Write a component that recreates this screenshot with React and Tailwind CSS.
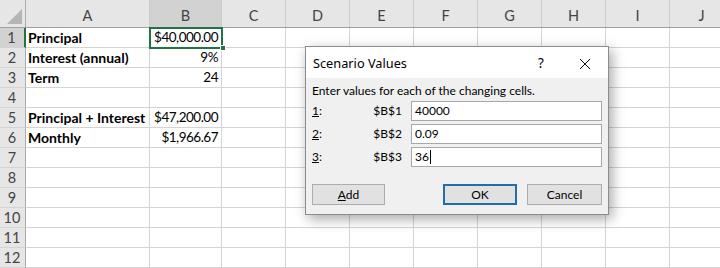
import React from "react";

const cols = [
  { k: "A", w: "w-[124px]" },
  { k: "B", w: "w-[72px]" },
  { k: "C", w: "w-[64px]" },
  { k: "D", w: "w-[64px]" },
  { k: "E", w: "w-[64px]" },
  { k: "F", w: "w-[64px]" },
  { k: "G", w: "w-[64px]" },
  { k: "H", w: "w-[64px]" },
  { k: "I", w: "w-[64px]" },
  { k: "J", w: "w-[64px]" },
];

const data = {
  1: ["Principal", "$40,000.00"],
  2: ["Interest (annual)", "9%"],
  3: ["Term", "24"],
  5: ["Principal + Interest", "$47,200.00"],
  6: ["Monthly", "$1,966.67"],
};

const rows = [1, 2, 3, 4, 5, 6, 7, 8, 9, 10, 11, 12];

function Row({ n }) {
  const d = data[n];
  return (
    <div className="flex h-[20px]">
      <div
        className={
          "w-[26px] shrink-0 flex items-center justify-center border-b border-[#d4d4d4] text-[14.5px] text-[#444] " +
          (n === 1
            ? "bg-[#d2d2d2] border-r-2 border-r-[#217346]"
            : "bg-[#e6e6e6] border-r border-r-[#ababab]")
        }
      >
        <span className="pr-[1px]">{n}</span>
      </div>
      {cols.map((c, i) => (
        <div
          key={c.k}
          className={
            c.w +
            " shrink-0 border-r border-b border-[#d4d4d4] flex items-center text-black whitespace-nowrap " +
            (i === 0
              ? "justify-start pl-[2px] font-bold text-[14px]"
              : "justify-end pr-[3px] text-[13.5px] tracking-[-0.5px]")
          }
        >
          {d && i === 0 ? d[0] : null}
          {d && i === 1 ? d[1] : null}
        </div>
      ))}
    </div>
  );
}

function Field({ n, cell, value, cursor }) {
  return (
    <div className="flex items-center h-[20px]">
      <span className="w-[40px] shrink-0">
        <span className="underline">{n}</span>:
      </span>
      <span className="w-[50px] shrink-0 text-right">{cell}</span>
      <div className="ml-[9px] w-[192px] h-[20px] bg-white border border-[#a8a8a8] flex items-center pl-[3px]">
        {value}
        {cursor ? <span className="inline-block w-[1px] h-[14px] bg-black ml-[1px]" /> : null}
      </div>
    </div>
  );
}

export default function App() {
  return (
    <div
      className="relative w-[720px] h-[268px] overflow-hidden bg-white"
      style={{ fontFamily: "Lato, 'Liberation Sans', sans-serif" }}
    >
      {/* column header */}
      <div className="flex h-[28px] bg-[#e6e6e6] border-b border-[#9f9f9f]">
        <div className="w-[26px] shrink-0 border-r border-[#ababab] relative">
          <div className="absolute right-[3px] bottom-[3px] w-0 h-0 border-l-[15px] border-l-transparent border-b-[15px] border-b-[#b5b5b5]" />
        </div>
        {cols.map((c) => (
          <div
            key={c.k}
            className={
              c.w +
              " shrink-0 border-r border-[#cdcdcd] flex items-end justify-center pb-[4px] leading-none text-[14.5px] text-[#444] " +
              (c.k === "B" ? "bg-[#d2d2d2]" : "")
            }
          >
            {c.k}
          </div>
        ))}
      </div>
      {rows.map((n) => (
        <Row key={n} n={n} />
      ))}

      {/* selection */}
      <div className="absolute left-[149px] top-[27px] w-[74px] h-[22px] border-2 border-[#217346] pointer-events-none" />
      <div className="absolute left-[220px] top-[45px] w-[6px] h-[6px] bg-[#217346] border border-white" />

      {/* dialog */}
      <div className="absolute left-[305px] top-[46px] w-[304px] h-[169px] border border-[#8c8c8c] bg-[#f0f0f0] shadow-[3px_4px_12px_rgba(0,0,0,0.35)] flex flex-col text-[12px] text-black">
        <div
          className="h-[31px] bg-white flex items-center pl-[7px] pt-[2px] text-[12.75px]"
          style={{ fontFamily: "'Noto Sans', 'Open Sans', sans-serif" }}
        >
          <span className="flex-1">Scenario Values</span>
          <span className="w-[20px] text-center mr-[28px] text-[13.5px]">?</span>
          <svg width="12" height="12" viewBox="0 0 12 12" className="mr-[17px]">
            <path d="M1 1 L11 11 M11 1 L1 11" stroke="#111" strokeWidth="1" />
          </svg>
        </div>
        <div className="px-[6px] pt-[5px] flex flex-col">
          <div className="h-[16px] flex items-center">Enter values for each of the changing cells.</div>
          <div className="mt-[2px] flex flex-col gap-[3px]">
            <Field n="1" cell="$B$1" value="40000" />
            <Field n="2" cell="$B$2" value="0.09" />
            <Field n="3" cell="$B$3" value="36" cursor />
          </div>
          <div className="mt-[17px] flex items-center">
            <button className="w-[73px] h-[21px] bg-[#e1e1e1] border border-[#adadad] flex items-center justify-center">
              <span><span className="underline">A</span>dd</span>
            </button>
            <div className="flex-1" />
            <button className="w-[74px] h-[21px] bg-[#e1e1e1] border-2 border-[#1f6fa8] flex items-center justify-center">
              OK
            </button>
            <button className="ml-[10px] w-[75px] h-[21px] bg-[#e1e1e1] border border-[#adadad] flex items-center justify-center">
              Cancel
            </button>
          </div>
        </div>
      </div>
    </div>
  );
}
